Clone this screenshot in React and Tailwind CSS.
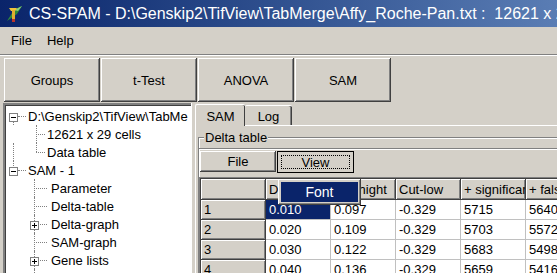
import React from "react";

const raised =
  "shadow-[inset_-1px_-1px_0_#404040,inset_1px_1px_0_#ffffff,inset_-2px_-2px_0_#808080]";

const TitleIcon = () => (
  <svg width="18" height="18" viewBox="0 0 18 18" className="shrink-0">
    <path d="M2 16 L9 5 L17 1 L12 9 Z" fill="#2f8a3a" />
    <path d="M9 5 L17 1 L13 6 Z" fill="#8fd07a" />
    <path d="M4 3 L12 3 L10 6 L6 6 Z" fill="#f0c43a" />
    <rect x="7" y="5" width="3" height="10" fill="#e0b030" />
    <rect x="7" y="14" width="3" height="3" fill="#b8342c" />
  </svg>
);

const Expander = ({ open }) => (
  <span className="relative inline-block w-[9px] h-[9px] border border-[#808080] bg-white shrink-0">
    <span className="absolute left-[1px] top-[3px] w-[5px] h-px bg-black" />
    {!open && <span className="absolute left-[3px] top-[1px] w-px h-[5px] bg-black" />}
  </span>
);

const treeRows = [
  { level: 0, text: "D:\\Genskip2\\TifView\\TabMe", up: false, down: true },
  { level: 1, text: "12621 x 29 cells", down: true, near: true },
  { level: 1, text: "Data table", down: false, near: true, root: true },
  { level: 0, text: "SAM - 1", up: true, down: false },
  { level: 1, text: "Parameter", down: true },
  { level: 1, text: "Delta-table", down: true },
  { level: 1, text: "Delta-graph", down: true, box: true },
  { level: 1, text: "SAM-graph", down: true },
  { level: 1, text: "Gene lists", down: true, box: true },
  { level: 1, text: "Comparative gene sets", down: true },
];

function TreeRow({ r }) {
  return (
    <div className="relative h-[18px] flex items-center whitespace-nowrap">
      {r.level === 0 && r.down && (
        <span className="absolute left-[7px] top-[9px] h-[9px] border-l border-dotted border-[#808080]" />
      )}
      {r.level === 0 && r.up && (
        <span className="absolute left-[7px] top-0 h-[9px] border-l border-dotted border-[#808080]" />
      )}
      {r.level === 1 && r.root && (
        <span className="absolute left-[7px] top-0 h-[18px] border-l border-dotted border-[#808080]" />
      )}
      {r.level === 0 && (
        <>
          <span className="absolute left-[12px] top-[9px] w-[8px] border-t border-dotted border-[#808080]" />
          <span className="absolute left-[3px] top-[4px]">
            <Expander open />
          </span>
          <span className="pl-[22px]">{r.text}</span>
        </>
      )}
      {r.level === 1 && (
        <>
          <span
            className={`absolute top-0 border-l border-dotted border-[#808080] ${r.down ? "h-[18px]" : "h-[9px]"} ${r.near ? "left-[30px]" : "left-[28px]"}`}
          />
          <span
            className={`absolute top-[9px] border-t border-dotted border-[#808080] ${r.near ? "left-[30px] w-[9px]" : "left-[28px] w-[13px]"}`}
          />
          {r.box && (
            <span className="absolute left-[24px] top-[4px]">
              <Expander open={false} />
            </span>
          )}
          <span className={r.near ? "pl-[41px]" : "pl-[45px]"}>{r.text}</span>
        </>
      )}
    </div>
  );
}

const cols = [65, 65, 65, 65, 65, 40];
const headers = ["", "Delta", "Cut-hight", "Cut-low", "+ significant", "+ false"];
const rows = [
  ["1", "0.010", "0.097", "-0.329", "5715", "5640"],
  ["2", "0.020", "0.109", "-0.329", "5703", "5572"],
  ["3", "0.030", "0.122", "-0.329", "5683", "5498"],
  ["4", "0.040", "0.136", "-0.329", "5659", "5416"],
];

function Cell({ children, fixed, sel, w }) {
  return (
    <div
      style={{ width: w }}
      className={`h-full shrink-0 overflow-hidden whitespace-nowrap pl-[3px] flex items-center ${
        fixed
          ? "bg-[#d4d0c8] border-r border-b border-[#404040] shadow-[inset_1px_1px_0_#ffffff,inset_-1px_-1px_0_#808080]"
          : sel
          ? "bg-[#0a246a] text-white border-r border-b border-[#c0c0c0]"
          : "bg-white border-r border-b border-[#c0c0c0]"
      }`}
    >
      {children}
    </div>
  );
}

export default function App() {
  return (
    <div
      className="w-[557px] h-[273px] overflow-hidden bg-[#d4d0c8] text-black text-[13px] leading-none flex flex-col"
      style={{ fontFamily: '"Liberation Sans", Arial, sans-serif' }}
    >
      {/* title bar */}
      <div className="h-[27px] shrink-0 bg-gradient-to-r from-[#0a246a] to-[#5a7db4] flex items-center gap-[6px] pl-[5px] text-white text-[16px] whitespace-nowrap overflow-hidden">
        <TitleIcon />
        <span>CS-SPAM - D:\Genskip2\TifView\TabMerge\Affy_Roche-Pan.txt :&nbsp; 12621 x 29 cells</span>
      </div>

      {/* menu */}
      <div className="h-[27px] shrink-0 flex items-center gap-[15px] pl-[11px]">
        <span>File</span>
        <span>Help</span>
      </div>
      <div className="h-px bg-[#808080] shrink-0" />
      <div className="h-px bg-white shrink-0" />

      {/* toolbar */}
      <div className="h-[46px] shrink-0 flex pt-[2px] pl-[4px] gap-px">
        {["Groups", "t-Test", "ANOVA", "SAM"].map((t) => (
          <div key={t} className={`w-[96px] h-full flex items-center justify-center ${raised}`}>
            {t}
          </div>
        ))}
      </div>

      {/* main */}
      <div className="flex-1 flex min-h-0 pt-[1px]">
        {/* tree */}
        <div className="w-[188px] ml-[3px] shrink-0 bg-white border-t-2 border-l-2 border-t-[#808080] border-l-[#808080] shadow-[inset_1px_1px_0_#404040] pt-[2px] pl-[1px] overflow-hidden">
          {treeRows.map((r, i) => (
            <TreeRow key={i} r={r} />
          ))}
        </div>
        {/* splitter */}
        <div className="w-[4px] shrink-0 border-l border-white" />

        {/* right */}
        <div className="flex-1 flex flex-col min-w-0">
          <div className="h-[22px] flex items-end shrink-0">
            <div className="relative z-10 h-[22px] w-[50px] bg-[#d4d0c8] border-t border-l border-white shadow-[inset_-1px_0_0_#404040] rounded-t-[2px] flex items-center justify-center pt-[1px] -mb-px">
              SAM
            </div>
            <div className="h-[20px] w-[47px] bg-[#d4d0c8] border-t border-white shadow-[inset_-1px_0_0_#404040,inset_-2px_0_0_#808080] rounded-t-[2px] flex items-center justify-center pt-[2px]">
              Log
            </div>
          </div>
          <div className="flex-1 border-t border-l border-white pl-[2px] pt-[11px] min-h-0">
            {/* group box */}
            <div className="relative h-full border-t border-l border-[#808080] shadow-[inset_1px_1px_0_#ffffff] pt-[10px]">
              <span className="absolute left-[5px] -top-[7px] bg-[#d4d0c8] px-px">Delta table</span>
              <div className="border-t border-[#808080] shadow-[inset_0_1px_0_#ffffff] pt-[2px] pl-px flex gap-px">
                <div className={`w-[76px] h-[21px] flex items-center justify-center ${raised}`}>File</div>
                <div className="w-[77px] h-[22px] border border-black p-[3px]">
                  <div className="h-full border border-dotted border-black flex items-center justify-center">
                    View
                  </div>
                </div>
              </div>

              {/* grid */}
              <div className="relative mt-[4px] border-t border-l border-[#808080] shadow-[inset_1px_1px_0_#404040] pl-[1px] pt-[1px]">
                <div className="flex h-[21px]">
                  {headers.map((h, i) => (
                    <Cell key={i} fixed w={cols[i]}>
                      {h}
                    </Cell>
                  ))}
                </div>
                {rows.map((r, ri) => (
                  <div key={ri} className="flex h-[20px]">
                    {r.map((c, ci) => (
                      <Cell key={ci} fixed={ci === 0} sel={ri === 0 && ci === 1} w={cols[ci]}>
                        {c}
                      </Cell>
                    ))}
                  </div>
                ))}

                {/* popup menu */}
                <div className={`absolute left-[78px] top-[1px] w-[83px] h-[26px] bg-[#d4d0c8] p-[3px] ${raised}`}>
                  <div className="h-full bg-[#0a246a] text-white flex items-center justify-center text-[14px]">
                    Font
                  </div>
                </div>
              </div>
            </div>
          </div>
        </div>
      </div>
    </div>
  );
}
